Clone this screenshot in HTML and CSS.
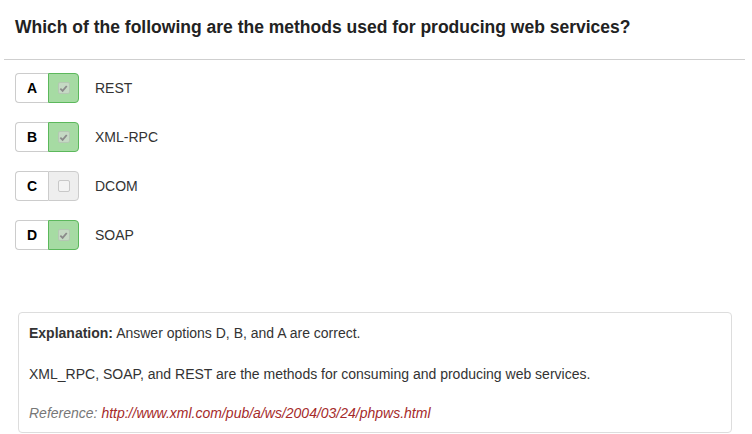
FILE: index.html
```html
<!DOCTYPE html>
<html>
<head>
<meta charset="utf-8">
<link rel="stylesheet" href="styles.css">
</head>
<body>
<div class="page">
  <h1 class="question">Which of the following are the methods used for producing web services?</h1>
  <hr class="rule">
  <div class="options">
    <div class="option">
      <div class="choice">
        <span class="letter">A</span>
        <span class="check on"><span class="box"><svg viewBox="0 0 10 10" width="9" height="9"><path d="M1.5 5.2 L4 7.6 L8.6 2.2" fill="none" stroke="#8a8a8a" stroke-width="2"/></svg></span></span>
      </div>
      <span class="label">REST</span>
    </div>
    <div class="option">
      <div class="choice">
        <span class="letter">B</span>
        <span class="check on"><span class="box"><svg viewBox="0 0 10 10" width="9" height="9"><path d="M1.5 5.2 L4 7.6 L8.6 2.2" fill="none" stroke="#8a8a8a" stroke-width="2"/></svg></span></span>
      </div>
      <span class="label">XML-RPC</span>
    </div>
    <div class="option">
      <div class="choice">
        <span class="letter">C</span>
        <span class="check off"><span class="box"></span></span>
      </div>
      <span class="label">DCOM</span>
    </div>
    <div class="option">
      <div class="choice">
        <span class="letter">D</span>
        <span class="check on"><span class="box"><svg viewBox="0 0 10 10" width="9" height="9"><path d="M1.5 5.2 L4 7.6 L8.6 2.2" fill="none" stroke="#8a8a8a" stroke-width="2"/></svg></span></span>
      </div>
      <span class="label">SOAP</span>
    </div>
  </div>
  <div class="explanation">
    <p><b>Explanation:</b> Answer options D, B, and A are correct.</p>
    <p class="body">XML_RPC, SOAP, and REST are the methods for consuming and producing web services.</p>
    <p class="ref">Reference: <a href="#">http://www.xml.com/pub/a/ws/2004/03/24/phpws.html</a></p>
  </div>
</div>
</body>
</html>
```
FILE: styles.css
```css
html, body {
  margin: 0;
  padding: 0;
  background: #fff;
}
body {
  font-family: "Liberation Sans", Arial, sans-serif;
  color: #333;
  font-size: 14px;
}
.page {
  width: 752px;
  height: 434px;
  overflow: hidden;
  padding-top: 14px;
  box-sizing: border-box;
}
.question {
  margin: 0 0 0 15px;
  font-size: 17.5px;
  line-height: 26px;
  font-weight: bold;
  color: #222;
}
.rule {
  margin: 19px 7px 0 4px;
  border: 0;
  border-top: 1px solid #cfcfcf;
  height: 0;
}
.options {
  display: flex;
  flex-direction: column;
  gap: 19px;
  margin: 13px 0 0 15px;
}
.option {
  display: flex;
  align-items: center;
  gap: 16px;
  height: 30px;
}
.choice {
  display: flex;
  width: 64px;
  height: 30px;
  box-sizing: border-box;
}
.letter {
  width: 33px;
  box-sizing: border-box;
  border: 1px solid #ccc;
  border-right: 0;
  border-radius: 4px 0 0 4px;
  display: flex;
  align-items: center;
  justify-content: center;
  font-weight: bold;
  font-size: 14px;
  color: #000;
  background: #fff;
}
.check {
  width: 31px;
  box-sizing: border-box;
  border-radius: 0 4px 4px 0;
  display: flex;
  align-items: center;
  justify-content: center;
}
.check.on {
  background: #a6dba3;
  border: 1px solid #5cb85c;
}
.check.off {
  background: #eeeeee;
  border: 1px solid #cccccc;
}
.box {
  width: 12px;
  height: 12px;
  box-sizing: border-box;
  border-radius: 2px;
  display: flex;
  align-items: center;
  justify-content: center;
}
.check.on .box {
  background: #c5d9c4;
  border: 1px solid #b4c8b3;
}
.check.off .box {
  background: #f3f3f3;
  border: 1px solid #c8c8c8;
}
.label {
  font-size: 14px;
  color: #333;
}
.explanation {
  margin: 62px 20px 0 18px;
  border: 1px solid #ddd;
  border-radius: 4px;
  padding: 10px 10px 1px 10px;
}
.explanation p {
  margin: 0 0 20px 0;
  line-height: 21px;
}
.explanation p.body {
  margin-bottom: 18px;
}
.explanation p.ref {
  margin-bottom: 7px;
  font-style: italic;
  color: #777;
}
.explanation a {
  color: #a52a2a;
  text-decoration: none;
}
```
